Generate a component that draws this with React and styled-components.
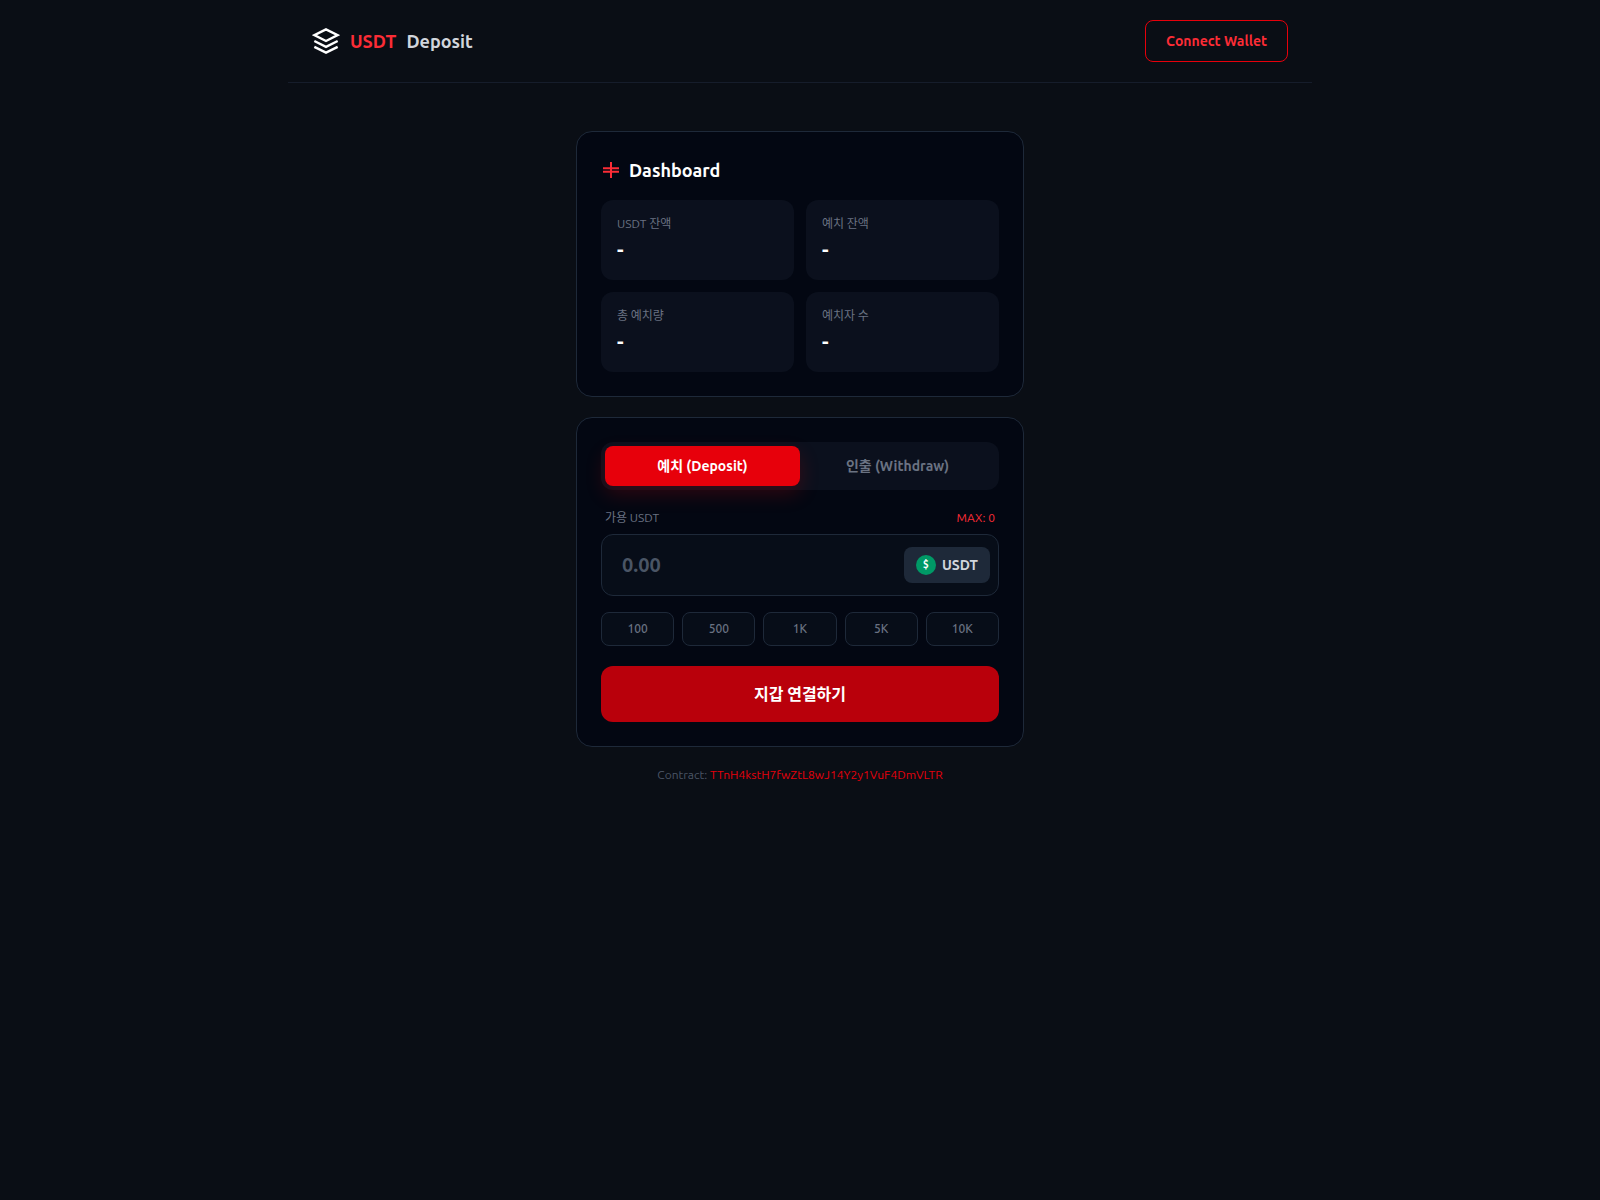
import React, { useState } from 'react';
import styled, { createGlobalStyle } from 'styled-components';

const GlobalStyle = createGlobalStyle`
  *, *::before, *::after {
    box-sizing: border-box;
  }

  body {
    margin: 0;
    background: #0a0e15;
    color: #f3f4f6;
    font-family: Ubuntu, 'Noto Sans', 'Noto Sans CJK KR', sans-serif;
    font-size: 16px;
    line-height: 24px;
  }

  button, input {
    font: inherit;
  }
`;

const Page = styled.div`
  min-height: 100vh;
`;

const Header = styled.header`
  display: flex;
  align-items: center;
  justify-content: space-between;
  max-width: 1024px;
  margin: 0 auto;
  padding: 20px 24px;
  border-bottom: 1px solid #161d2b;
`;

const Brand = styled.div`
  display: flex;
  align-items: center;
  gap: 10px;
  font-size: 18px;
  line-height: 28px;
  font-weight: 600;
  color: #d1d5dc;
`;

const BrandAccent = styled.span`
  color: #fb2c36;
`;

const ConnectButton = styled.button`
  height: 42px;
  padding: 0 20px;
  border: 1px solid #e7000b;
  border-radius: 8px;
  background: transparent;
  color: #fb2c36;
  font-size: 14px;
  line-height: 20px;
  font-weight: 600;
  cursor: pointer;
`;

const Main = styled.main`
  display: flex;
  flex-direction: column;
  gap: 20px;
  max-width: 448px;
  margin: 48px auto;
`;

const Card = styled.section`
  padding: 24px;
  border: 1px solid #1e2939;
  border-radius: 16px;
  background: #030712;
`;

const CardTitle = styled.h2`
  display: flex;
  align-items: center;
  gap: 8px;
  margin: 0 0 16px;
  font-size: 18px;
  line-height: 28px;
  font-weight: 600;
  color: #fff;
`;

const Stats = styled.div`
  display: grid;
  grid-template-columns: 1fr 1fr;
  gap: 12px;
`;

const Stat = styled.div`
  height: 80px;
  padding: 16px;
  border-radius: 12px;
  background: #0b101d;
`;

const StatLabel = styled.div`
  margin-bottom: 4px;
  font-size: 12px;
  line-height: 16px;
  color: #6a7282;
`;

const StatValue = styled.div`
  font-size: 20px;
  line-height: 28px;
  font-weight: 700;
  color: #fff;
`;

const Tabs = styled.div`
  display: flex;
  margin-bottom: 20px;
  padding: 4px;
  border-radius: 12px;
  background: #0b101d;
`;

const Tab = styled.button`
  flex: 1;
  height: 40px;
  border: 0;
  border-radius: 8px;
  background: ${props => (props.$active ? '#e7000b' : 'transparent')};
  box-shadow: ${props =>
    props.$active ? '0 8px 20px rgba(231, 0, 11, 0.2)' : 'none'};
  color: ${props => (props.$active ? '#fff' : '#6a7282')};
  font-size: 14px;
  line-height: 20px;
  font-weight: 600;
  cursor: pointer;
`;

const FieldHead = styled.div`
  display: flex;
  justify-content: space-between;
  margin-bottom: 8px;
  padding: 0 4px;
  font-size: 12px;
  line-height: 16px;
  color: #6a7282;
`;

const MaxButton = styled.button`
  padding: 0;
  border: 0;
  background: none;
  color: #fb2c36;
  cursor: pointer;
`;

const AmountBox = styled.div`
  display: flex;
  align-items: center;
  margin-bottom: 16px;
  padding: 12px 8px 12px 20px;
  border: 1px solid #1e2939;
  border-radius: 12px;
  background: #070d18;
`;

const AmountInput = styled.input`
  flex: 1;
  min-width: 0;
  height: 28px;
  padding: 0;
  border: 0;
  outline: 0;
  background: transparent;
  color: #fff;
  font-size: 20px;
  line-height: 28px;
  font-weight: 700;

  &::placeholder {
    color: #4a5565;
    opacity: 1;
  }
`;

const TokenChip = styled.div`
  display: flex;
  align-items: center;
  gap: 6px;
  height: 36px;
  padding: 0 12px;
  border-radius: 8px;
  background: #1e2939;
  color: #d1d5dc;
  font-size: 14px;
  line-height: 20px;
  font-weight: 600;
`;

const TokenIcon = styled.span`
  width: 20px;
  height: 20px;
  border-radius: 50%;
  background: #009966;
  color: #fff;
  font-size: 10px;
  line-height: 20px;
  font-weight: 700;
  text-align: center;
`;

const QuickAmounts = styled.div`
  display: grid;
  grid-template-columns: repeat(5, 1fr);
  gap: 8px;
  margin-bottom: 20px;
`;

const QuickButton = styled.button`
  height: 34px;
  padding: 0;
  border: 1px solid #1e2939;
  border-radius: 8px;
  background: #070d18;
  color: #6a7282;
  font-size: 12px;
  line-height: 16px;
  font-weight: 500;
  cursor: pointer;
`;

const SubmitButton = styled.button`
  display: block;
  width: 100%;
  height: 56px;
  border: 0;
  border-radius: 12px;
  background: #b9000b;
  color: #fff;
  font-size: 16px;
  font-weight: 700;
  cursor: pointer;
`;

const Contract = styled.p`
  margin: 0;
  font-size: 12px;
  line-height: 16px;
  text-align: center;
  color: #4a5565;

  a {
    color: #e7000b;
    text-decoration: none;
  }
`;

const LayersIcon = () => (
  <svg width="28" height="28" viewBox="0 0 24 24" fill="none" stroke="#fff" strokeWidth="2">
    <path d="M12 2L2 7l10 5 10-5-10-5z" />
    <path d="M2 17l10 5 10-5" />
    <path d="M2 12l10 5 10-5" />
  </svg>
);

const DashboardIcon = () => (
  <svg width="20" height="20" viewBox="0 0 20 20" fill="none" stroke="#fb2c36" strokeWidth="2">
    <path d="M10 2v16M2 8.3h16M2 11.7h16" />
  </svg>
);

const stats = ['USDT 잔액', '예치 잔액', '총 예치량', '예치자 수'];

const quickAmounts = [
  { label: '100', value: '100' },
  { label: '500', value: '500' },
  { label: '1K', value: '1000' },
  { label: '5K', value: '5000' },
  { label: '10K', value: '10000' },
];

const App = () => {
  const [tab, setTab] = useState('deposit');
  const [amount, setAmount] = useState('');

  return (
    <Page>
      <GlobalStyle />
      <Header>
        <Brand>
          <LayersIcon />
          <BrandAccent>USDT</BrandAccent>
          <span>Deposit</span>
        </Brand>
        <ConnectButton type="button">Connect Wallet</ConnectButton>
      </Header>
      <Main>
        <Card>
          <CardTitle>
            <DashboardIcon />
            Dashboard
          </CardTitle>
          <Stats>
            {stats.map(label => (
              <Stat key={label}>
                <StatLabel>{label}</StatLabel>
                <StatValue>-</StatValue>
              </Stat>
            ))}
          </Stats>
        </Card>
        <Card>
          <Tabs>
            <Tab type="button" $active={tab === 'deposit'} onClick={() => setTab('deposit')}>
              예치 (Deposit)
            </Tab>
            <Tab type="button" $active={tab === 'withdraw'} onClick={() => setTab('withdraw')}>
              인출 (Withdraw)
            </Tab>
          </Tabs>
          <FieldHead>
            <label htmlFor="amount">가용 USDT</label>
            <MaxButton type="button" onClick={() => setAmount('0')}>MAX: 0</MaxButton>
          </FieldHead>
          <AmountBox>
            <AmountInput
              id="amount"
              inputMode="decimal"
              placeholder="0.00"
              value={amount}
              onChange={e => setAmount(e.target.value)}
            />
            <TokenChip>
              <TokenIcon>$</TokenIcon>
              USDT
            </TokenChip>
          </AmountBox>
          <QuickAmounts>
            {quickAmounts.map(({ label, value }) => (
              <QuickButton key={label} type="button" onClick={() => setAmount(value)}>
                {label}
              </QuickButton>
            ))}
          </QuickAmounts>
          <SubmitButton type="button">지갑 연결하기</SubmitButton>
        </Card>
        <Contract>
          Contract: <a href="#contract">TTnH4kstH7fwZtL8wJ14Y2y1VuF4DmVLTR</a>
        </Contract>
      </Main>
    </Page>
  );
};

export default App;
